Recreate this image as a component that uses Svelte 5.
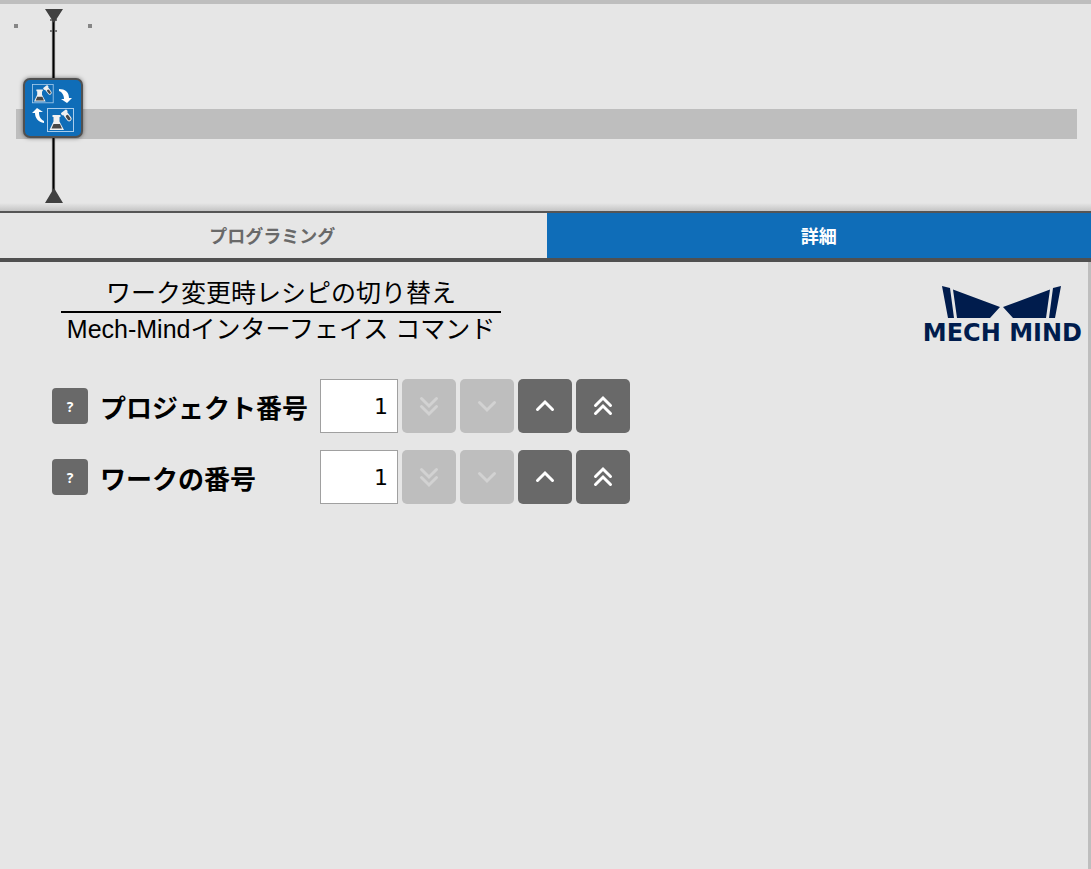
<script lang="ts">
  let activeTab = $state('details');
  let fields = $state([
    { id: 'project', label: 'プロジェクト番号', value: 1 },
    { id: 'work', label: 'ワークの番号', value: 1 }
  ]);

  const min = 1;
  const tabs = [
    { id: 'programming', label: 'プログラミング' },
    { id: 'details', label: '詳細' }
  ];
  const steps = [
    { delta: -10, name: '-10', paths: ['M4.500 4.500L12 12l7.500-7.500', 'M4.500 12.500L12 20l7.500-7.500'] },
    { delta: -1, name: '-1', paths: ['M4.500 8.500L12 16l7.500-7.500'] },
    { delta: 1, name: '+1', paths: ['M4.500 15.500L12 8l7.500 7.500'] },
    { delta: 10, name: '+10', paths: ['M4.500 11.500L12 4l7.500 7.500', 'M4.500 19.500L12 12l7.500 7.500'] }
  ];

  function step(field, delta) {
    field.value = Math.max(min, Number(field.value) + delta);
  }
</script>

<div class="screen">
  <section class="timeline">
    <div class="track"></div>
    <svg class="playhead" width="84" height="196" viewBox="0 0 84 196">
      <path d="M0 16h4v4H0zM74 16h4v4h-4z" fill="#868686" />
      <path d="M36 12h7M36 23h7" stroke="#777" stroke-width="2" />
      <path d="M39.500 12v172" stroke="#a0a0a0" stroke-width="3.400" />
      <path d="M39.500 12v172" stroke="#000" stroke-width="2" />
      <path d="M31 1h18l-9 14zM31 195h18l-9-15z" fill="#404040" />
    </svg>
    <button class="node" aria-label="レシピの切り替え">
      <svg width="56" height="56" viewBox="0 0 56 56">
        <defs>
          <g id="recipe">
            <rect x="0.5" y="0.5" width="26" height="23" fill="none" stroke="#a9cdec" />
            <path d="M5.500 7h8v2h-1v4.500L17 22H2.500l4-8.500V9h-1z" fill="#f0f0f0" />
            <path d="M6.500 16h6.500l2 4.500H4.500z" fill="#484848" />
            <g transform="rotate(-37 20 8)">
              <rect x="17.500" y="3" width="5" height="11" rx="2.500" fill="#f0f0f0" />
              <rect x="16.500" y="2" width="7" height="3" rx="1" fill="#f0f0f0" />
              <rect x="18.500" y="7" width="3" height="6" rx="1.500" fill="#484848" />
            </g>
          </g>
        </defs>
        <g transform="translate(7 4) scale(.8)"><use href="#recipe" /></g>
        <g transform="translate(22 28)"><use href="#recipe" /></g>
        <path d="M34 9c6 0 10 3 10 9h3l-5 5-6-4h3c0-4-2-7-5-8z" fill="#fff" />
        <path d="M19 43c-6-1-9-5-9-10H7l5-5 6 4h-4c0 4 1 7 5 9z" fill="#fff" />
      </svg>
    </button>
  </section>

  <nav class="tabs">
    {#each tabs as tab}
      <button class="tab" class:active={activeTab === tab.id} onclick={() => (activeTab = tab.id)}>
        {tab.label}
      </button>
    {/each}
  </nav>

  <main class="content">
    <header class="heading">
      <div class="title">
        <h1>ワーク変更時レシピの切り替え</h1>
        <p>Mech-Mindインターフェイス コマンド</p>
      </div>
      <div class="logo">
        <svg width="120" height="33" viewBox="0 0 120 33">
          <path d="M0 0l8 2 4 30H6zM11 3.500L58 21l-10 11H15zM119 0l-8 2-4 30h6zM108 3.500L61 21l10 11h33z" fill="#001c4d" />
        </svg>
        <span>MECH MIND</span>
      </div>
    </header>

    <form class="fields">
      {#each fields as field}
        <div class="field">
          <button type="button" class="help" aria-label="{field.label} ヘルプ">?</button>
          <label for={field.id}>{field.label}</label>
          <div class="stepper">
            <input id={field.id} type="text" inputmode="numeric" bind:value={field.value} />
            {#each steps as s}
              <button
                type="button"
                class="step"
                aria-label={s.name}
                disabled={s.delta < 0 && field.value <= min}
                onclick={() => step(field, s.delta)}
              >
                <svg width="24" height="24" viewBox="0 0 24 24">
                  {#each s.paths as d}
                    <path {d} />
                  {/each}
                </svg>
              </button>
            {/each}
          </div>
        </div>
      {/each}
    </form>
  </main>
</div>

<style>
:global(body) {
  margin: 0;
  background: #e6e6e6;
}
.screen {
  display: flex;
  flex-direction: column;
  min-height: 100vh;
  color: #000;
  font-family: "Liberation Sans", "Noto Sans CJK JP", sans-serif;
}
button {
  padding: 0;
  border: none;
  font-family: inherit;
  cursor: pointer;
}
.timeline {
  position: relative;
  padding: 105px 14px 72px 16px;
  border-top: 4px solid #bebebe;
  background: linear-gradient(to top, #c4c4c4, #e6e6e6 8px);
}
.track {
  height: 30px;
  background: #bebebe;
}
.playhead {
  position: absolute;
  top: 4px;
  left: 14px;
}
.node {
  position: absolute;
  top: 74px;
  left: 23px;
  box-sizing: border-box;
  width: 60px;
  height: 60px;
  border: 2px solid #505050;
  border-radius: 7px;
  background: #0f6db8;
  box-shadow: 0 0 4px rgba(0, 0, 0, 0.5);
}
.node svg {
  display: block;
}
.tabs {
  display: grid;
  grid-template-columns: 1fr 1fr;
  gap: 2px;
  border-top: 2px solid #555;
  border-bottom: 4px solid #505050;
}
.tab {
  height: 45px;
  padding-bottom: 2px;
  background: #e6e6e6;
  color: #696969;
  font-size: 18px;
  font-weight: 700;
}
.tab.active {
  background: #0f6db8;
  color: #fff;
}
.content {
  flex: 1;
  padding: 13px 6px 24px 52px;
  border-right: 3px solid #bebebe;
}
.heading {
  display: flex;
  justify-content: space-between;
  align-items: flex-start;
}
.title {
  width: 440px;
  margin-left: 9px;
  text-align: center;
}
.title h1,
.title p {
  margin: 0;
  font-size: 25px;
  font-weight: 400;
  line-height: 36px;
}
.title h1 {
  border-bottom: 2px solid #000;
}
.title p {
  line-height: 32px;
}
.logo {
  display: flex;
  flex-direction: column;
  align-items: center;
  padding-top: 11px;
  color: #001c4d;
  font-family: "DejaVu Sans", sans-serif;
  font-size: 24px;
  font-weight: 700;
  line-height: 28px;
}
.fields {
  display: grid;
  gap: 17px;
  margin-top: 32px;
}
.field {
  display: grid;
  grid-template-columns: 36px 208px auto;
  justify-content: start;
  align-items: center;
  column-gap: 12px;
}
.help {
  height: 36px;
  border-radius: 4px;
  background: #696969;
  color: #fff;
  font-family: "Open Sans", sans-serif;
  font-size: 14px;
  font-weight: 700;
}
label {
  font-size: 26px;
  font-weight: 700;
  white-space: nowrap;
}
.stepper {
  display: flex;
  gap: 4px;
}
.stepper input {
  box-sizing: border-box;
  width: 78px;
  height: 54px;
  padding: 0 9px;
  border: 1px solid #a0a0a0;
  border-radius: 0;
  background: #fff;
  color: #000;
  font-family: "DejaVu Sans", sans-serif;
  font-size: 22px;
  text-align: right;
}
.step {
  display: grid;
  place-items: center;
  width: 54px;
  height: 54px;
  border-radius: 5px;
  background: #696969;
  color: #fff;
}
.step:disabled {
  background: #bebebe;
  color: #d2d2d2;
  cursor: default;
}
.step path {
  fill: none;
  stroke: currentColor;
  stroke-width: 3;
  stroke-linecap: round;
}
</style>
